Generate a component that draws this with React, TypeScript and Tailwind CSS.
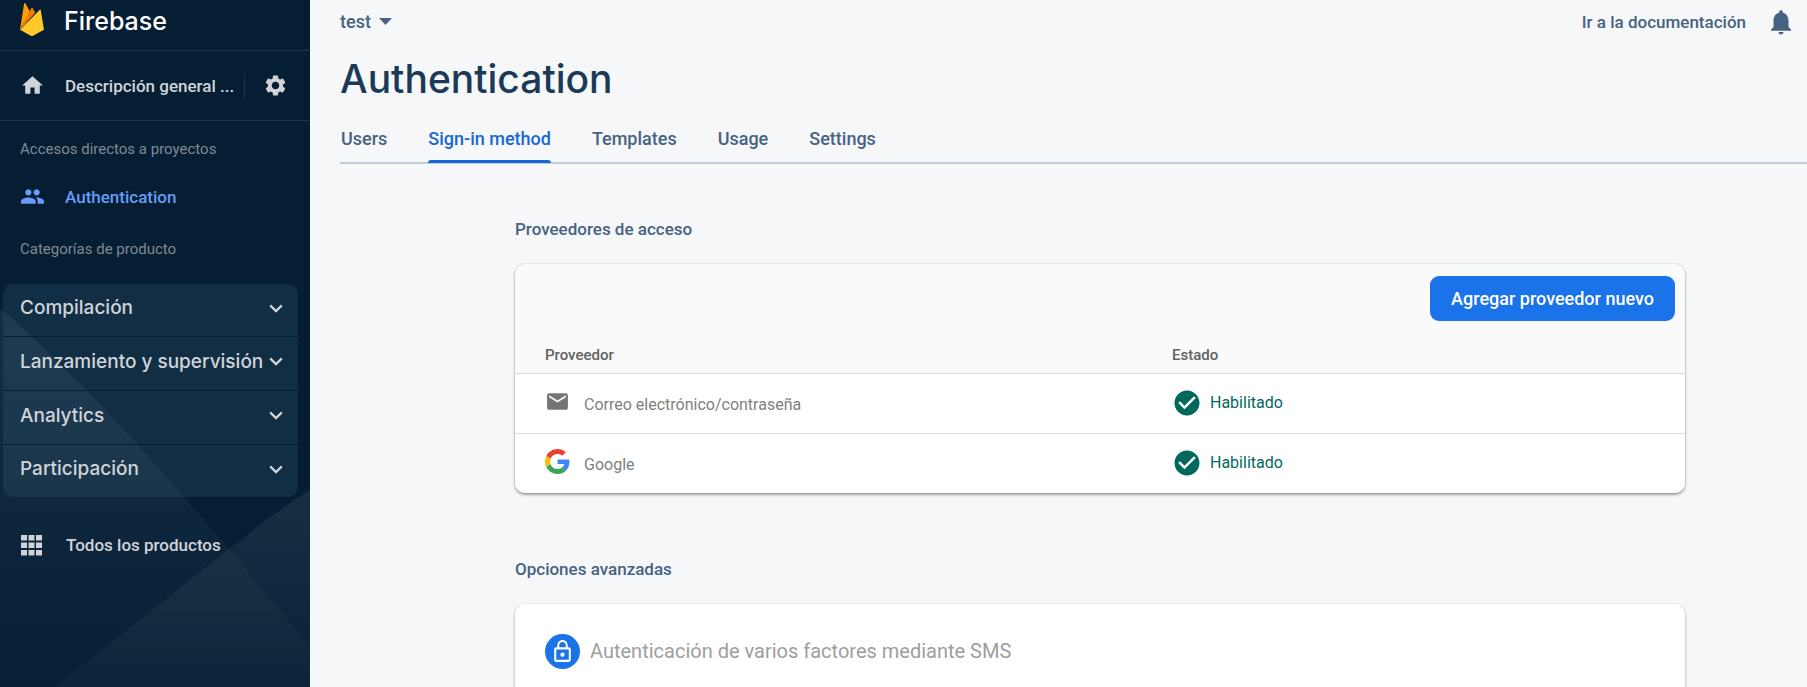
import {
  MdCheckCircle,
  MdEmail,
  MdHome,
  MdLockOutline,
  MdNotifications,
  MdPeople,
  MdSettings,
} from "react-icons/md";

const categories = ["Compilación", "Lanzamiento y supervisión", "Analytics", "Participación"];

const tabs = ["Users", "Sign-in method", "Templates", "Usage", "Settings"];
const activeTab = "Sign-in method";

function FirebaseLogo() {
  return (
    <svg viewBox="3.3 0 17.4 24" className="h-[33px] w-6 shrink-0" aria-hidden="true">
      <path fill="#FFA000" d="M3.316 19.365 6.255.461A.542.542 0 0 1 7.27.288l3.2 6 Z" />
      <path fill="#F57C00" d="M14.3 7.147l-1.82-3.482a.542.542 0 0 0-.96 0L3.316 19.365z" />
      <path
        fill="#FFCA28"
        d="M20.684 19.364l-2.25-14a.54.54 0 0 0-.919-.295L3.316 19.365l7.856 4.427a1.621 1.621 0 0 0 1.588 0z"
      />
    </svg>
  );
}

function GoogleIcon() {
  return (
    <svg viewBox="0 0 48 48" className="size-[25px]" aria-hidden="true">
      <path
        fill="#EA4335"
        d="M24 9.5c3.54 0 6.71 1.22 9.21 3.6l6.85-6.85C35.9 2.38 30.47 0 24 0 14.62 0 6.51 5.38 2.56 13.22l7.98 6.19C12.43 13.72 17.74 9.5 24 9.5z"
      />
      <path
        fill="#4285F4"
        d="M46.98 24.55c0-1.57-.15-3.09-.38-4.55H24v9.02h12.94c-.58 2.96-2.26 5.48-4.78 7.18l7.73 6c4.51-4.18 7.09-10.36 7.09-17.65z"
      />
      <path
        fill="#FBBC05"
        d="M10.53 28.59c-.48-1.45-.76-2.99-.76-4.59s.27-3.14.76-4.59l-7.98-6.19C.92 16.46 0 20.12 0 24c0 3.88.92 7.54 2.56 10.78l7.97-6.19z"
      />
      <path
        fill="#34A853"
        d="M24 48c6.48 0 11.93-2.13 15.89-5.81l-7.73-6c-2.15 1.45-4.92 2.3-8.16 2.3-6.26 0-11.57-4.22-13.47-9.91l-7.98 6.19C6.51 42.62 14.62 48 24 48z"
      />
    </svg>
  );
}

function GridIcon() {
  const cells = [0, 7.5, 15];
  return (
    <svg viewBox="0 0 21 21" className="size-[21px] shrink-0" fill="currentColor" aria-hidden="true">
      {cells.map((y) => cells.map((x) => <rect key={`${x}-${y}`} x={x} y={y} width="6" height="5.5" />))}
    </svg>
  );
}

function Chevron() {
  return (
    <svg viewBox="0 0 14 9" className="h-[9px] w-3.5 shrink-0" fill="none" aria-hidden="true">
      <path d="M1.2 1.4 7 7.1l5.800-5.700" stroke="currentColor" strokeWidth="2.2" />
    </svg>
  );
}

function SidebarBackdrop() {
  return (
    <svg
      viewBox="0 0 310 400"
      className="pointer-events-none absolute bottom-0 left-0 h-[400px] w-full"
      preserveAspectRatio="none"
      aria-hidden="true"
    >
      <defs>
        <linearGradient id="slopeLeft" x1="0" y1="0" x2="0" y2="1">
          <stop offset="0" stopColor="#fff" stopOpacity="0.07" />
          <stop offset="1" stopColor="#fff" stopOpacity="0.01" />
        </linearGradient>
        <linearGradient id="slopeRight" x1="0" y1="0" x2="0" y2="1">
          <stop offset="0" stopColor="#fff" stopOpacity="0.07" />
          <stop offset="1" stopColor="#fff" stopOpacity="0.02" />
        </linearGradient>
      </defs>
      <path fill="url(#slopeLeft)" d="M0 22Q20 38 32 50L87 103 137 157 184 210 230 263 310 360V400H0Z" />
      <path fill="url(#slopeRight)" d="M310 203Q280 222 257 240L55 400H310Z" />
    </svg>
  );
}

function Sidebar() {
  return (
    <aside className="relative w-[310px] shrink-0 bg-[#051e34] text-[#d0d4d9]">
      <SidebarBackdrop />
      <div className="relative">
        <div className="flex h-[51px] items-start gap-5 border-b border-[#1e3549] pt-[3px] pl-5">
          <FirebaseLogo />
          <span className="pt-0.5 font-['Inter',sans-serif] text-[25px] leading-8 font-medium text-white">Firebase</span>
        </div>

        <div className="flex h-[70px] items-center border-b border-[#1e3549] pl-5">
          <a href="#overview" className="flex min-w-0 items-center gap-5">
            <MdHome className="size-[25px] shrink-0" />
            <span className="w-[175px] text-[17px] leading-6 font-medium whitespace-nowrap">
              Descripción general ...
            </span>
          </a>
          <span className="ml-1 h-6 w-px bg-[#1e3549]" />
          <button type="button" aria-label="Configuración" className="ml-[18px]">
            <MdSettings className="size-[25px]" />
          </button>
        </div>

        <h2 className="mt-[18px] pl-5 text-[15px] leading-5 text-[#7f8a94]">Accesos directos a proyectos</h2>
        <a href="#authentication" className="mt-[25px] flex items-center gap-5 pl-5 text-[#669df6]">
          <MdPeople className="size-[25px]" />
          <span className="text-[17px] leading-6 font-medium">Authentication</span>
        </a>
        <h2 className="mt-[30px] pl-5 text-[15px] leading-5 text-[#7f8a94]">Categorías de producto</h2>

        <nav className="mt-[25px] mr-3 ml-[3px] overflow-hidden rounded-[10px]">
          {categories.map((name) => (
            <button
              key={name}
              type="button"
              className="flex h-[54px] w-full items-center justify-between border-b border-[#051e34] bg-[#6ba3bf]/12 pr-[15px] pb-1 pl-[17px] first:h-[53px] last:h-[52px] last:border-b-0"
            >
              <span className="font-['Inter',sans-serif] text-[19px] leading-6 font-medium whitespace-nowrap">
                {name}
              </span>
              <Chevron />
            </button>
          ))}
        </nav>

        <a href="#products" className="mt-9 flex items-center gap-6 pl-[21px]">
          <GridIcon />
          <span className="text-[17px] leading-6 font-medium">Todos los productos</span>
        </a>
      </div>
    </aside>
  );
}

function TopBar() {
  return (
    <div className="flex h-[43px] items-center justify-between pr-[11px] text-[#476282]">
      <button type="button" className="flex items-center gap-2 text-lg leading-6 font-medium">
        test
        <svg viewBox="0 0 13 7" className="h-[7px] w-[13px]" fill="currentColor" aria-hidden="true">
          <path d="M0 0H13L6.500 7Z" />
        </svg>
      </button>
      <div className="flex items-center gap-5">
        <a href="#docs" className="text-[17px] leading-6 font-medium">
          Ir a la documentación
        </a>
        <button type="button" aria-label="Notificaciones">
          <MdNotifications className="size-[30px]" />
        </button>
      </div>
    </div>
  );
}

function Tabs() {
  return (
    <nav className="flex gap-[41px] border-b-2 border-[#bccddf] px-px">
      {tabs.map((tab) => (
        <a
          key={tab}
          href={`#${tab}`}
          aria-current={tab === activeTab ? "page" : undefined}
          className={
            tab === activeTab
              ? "relative h-[35px] text-lg leading-6 font-medium text-[#1967d2] after:absolute after:inset-x-0 after:-bottom-px after:h-[3px] after:rounded-t-[3px] after:bg-[#1967d2]"
              : "h-[35px] text-lg leading-6 font-medium text-[#476282]"
          }
        >
          {tab}
        </a>
      ))}
    </nav>
  );
}

function ProviderRow({ icon, name }: { icon: React.ReactNode; name: string }) {
  return (
    <tr className="h-[60px] border-t border-[#dcdcdc] bg-white">
      <td className="pl-[30px]">
        <div className="flex items-center gap-3.5 text-[#757575]">
          <span className="pb-1">{icon}</span>
          <span className="pt-1 text-[#808080]">{name}</span>
        </div>
      </td>
      <td>
        <div className="flex items-center gap-2 text-[#00695c]">
          <MdCheckCircle className="size-[30px]" />
          <span>Habilitado</span>
        </div>
      </td>
    </tr>
  );
}

function ProvidersCard() {
  return (
    <div className="mt-[23px] overflow-hidden rounded-[10px] bg-[#fafafa] shadow-[0_2px_3px_rgba(0,0,0,0.35),0_0_2px_rgba(0,0,0,0.2)]">
      <div className="flex justify-end px-2.5 pt-3 pb-[13px]">
        <button
          type="button"
          className="h-[45px] rounded-[9px] bg-[#1a73e8] px-[21px] text-lg leading-6 font-medium text-white"
        >
          Agregar proveedor nuevo
        </button>
      </div>
      <table className="w-full table-fixed border-collapse text-left text-base leading-5">
        <thead>
          <tr className="h-[39px] text-[15px] text-[#616161]">
            <th className="w-[657px] pt-1 pl-[30px] font-medium">Proveedor</th>
            <th className="pt-1 font-medium">Estado</th>
          </tr>
        </thead>
        <tbody>
          <ProviderRow icon={<MdEmail className="size-[25px]" />} name="Correo electrónico/contraseña" />
          <ProviderRow icon={<GoogleIcon />} name="Google" />
        </tbody>
      </table>
    </div>
  );
}

export default function App() {
  return (
    <div className="flex h-screen overflow-hidden bg-[#f6f7f9] font-['Roboto',sans-serif]">
      <Sidebar />
      <main className="min-w-0 flex-1 pl-[30px]">
        <TopBar />
        <h1 className="mt-2.5 font-['Inter',sans-serif] text-[39px] leading-[52px] font-medium text-[#1b3a57]">
          Authentication
        </h1>
        <div className="mt-[22px]">
          <Tabs />
        </div>
        <div className="pr-[122px] pl-[175px]">
          <section className="pt-[53px]">
            <h2 className="text-[17px] leading-6 font-medium text-[#476282]">Proveedores de acceso</h2>
            <ProvidersCard />
          </section>
          <section className="pt-16">
            <h2 className="text-[17px] leading-6 font-medium text-[#476282]">Opciones avanzadas</h2>
            <div className="mt-[23px] flex h-[120px] items-start gap-2.5 rounded-[10px] bg-white px-[30px] pt-[30px] shadow-[0_1px_3px_rgba(0,0,0,0.35)]">
              <span className="flex size-[35px] items-center justify-center rounded-full bg-[#1a73e8] text-white">
                <MdLockOutline className="size-[25px]" />
              </span>
              <h3 className="text-xl leading-[35px] text-[#9e9e9e]">Autenticación de varios factores mediante SMS</h3>
            </div>
          </section>
        </div>
      </main>
    </div>
  );
}
